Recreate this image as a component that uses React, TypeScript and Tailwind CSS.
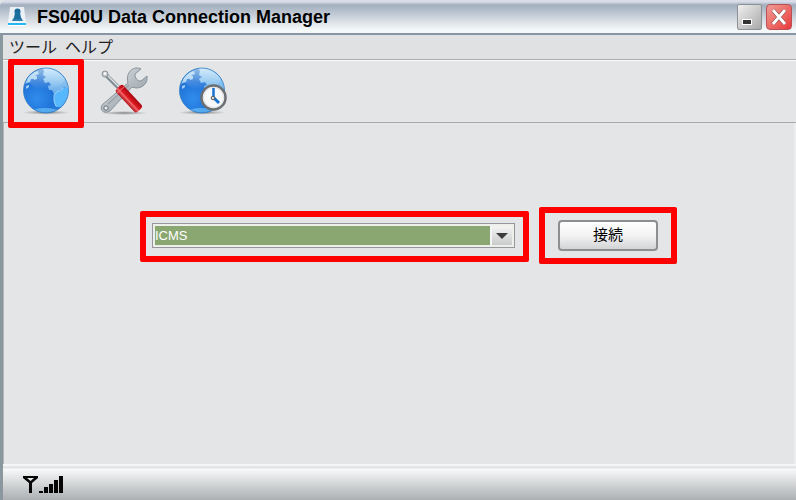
import type { ReactNode } from "react";

const uiFont = "font-['Noto_Sans','Noto_Sans_CJK_JP',sans-serif]";

function AppIcon() {
  return (
    <svg viewBox="0 0 20 20" className="h-5 w-5" aria-hidden="true">
      <path d="M3 0h14l2 16H1z" fill="#f4f8fc" opacity="0.85" />
      <path d="M5 14c1-3 3-4 3-6h5c0 2 2 3 3 6z" fill="#2f7fae" />
      <circle cx="10.500" cy="4.500" r="3" fill="#17699b" />
      <path d="M8 5h5l1 7H7z" fill="#1b6f9f" />
      <rect x="1" y="16" width="18" height="2" fill="#27b7f0" />
      <rect x="1" y="18" width="18" height="1" fill="#ffffff" />
    </svg>
  );
}

function GlobeShape({ id }: { id: string }) {
  return (
    <>
      <defs>
        <radialGradient id={`${id}-sea`} cx="0.3" cy="0.68" r="0.85">
          <stop offset="0" stopColor="#2f8cec" />
          <stop offset="0.45" stopColor="#2173d8" />
          <stop offset="0.75" stopColor="#3583d2" />
          <stop offset="1" stopColor="#7dbdea" />
        </radialGradient>
        <linearGradient id={`${id}-land`} x1="0" y1="0" x2="0" y2="1">
          <stop offset="0" stopColor="#a9d9f7" />
          <stop offset="1" stopColor="#66aae8" />
        </linearGradient>
        <linearGradient id={`${id}-shine`} x1="0" y1="0" x2="0" y2="1">
          <stop offset="0" stopColor="#ffffff" stopOpacity="0.5" />
          <stop offset="1" stopColor="#ffffff" stopOpacity="0" />
        </linearGradient>
        <radialGradient id={`${id}-shadow`}>
          <stop offset="0" stopColor="#555" stopOpacity="0.75" />
          <stop offset="1" stopColor="#777" stopOpacity="0" />
        </radialGradient>
        <clipPath id={`${id}-clip`}>
          <circle cx="26" cy="24.500" r="22" />
        </clipPath>
      </defs>
      <ellipse cx="26" cy="46.500" rx="24" ry="2.200" fill={`url(#${id}-shadow)`} />
      <circle cx="26" cy="24.500" r="22.500" fill={`url(#${id}-sea)`} stroke="#2f7cc4" strokeWidth="0.800" />
      <g clipPath={`url(#${id}-clip)`}>
        <path
          d="M22 1h13l10 8 5 13-3 1-3-2-2 3-2 0-1 4-2-2 0 4-3-2-2-4-3 0-1-4 3-1-2-3-4 1-2-4 3-2-3-2 1-4z"
          fill={`url(#${id}-land)`}
        />
        <path d="M5 18l3-7 6-5 4-1 1 3-3 1-2 4-3 0-1 3-3 1zM14 10l3 0 0 3-3 1zM6 20l3-1 0 2-3 2z" fill="#b9dff7" opacity="0.850" />
        <path d="M34 29l4-4 3 0 2-3 6 0-1 11-7 8-5 0-2-5z" fill="#57b7fc" />
        <path d="M36 40l-2-5 0-6 4-4 3 0 2-3" fill="none" stroke="#a4d8fb" strokeWidth="0.800" />
        <ellipse cx="26" cy="12" rx="19" ry="11" fill={`url(#${id}-shine)`} />
        <ellipse cx="25" cy="46" rx="14" ry="4" fill="#77cdfb" opacity="0.600" />
      </g>
    </>
  );
}

function GlobeIcon() {
  return (
    <svg viewBox="0 0 52 52" className="h-13 w-13" aria-hidden="true">
      <GlobeShape id="globe" />
    </svg>
  );
}

function ToolsIcon() {
  return (
    <svg viewBox="0 0 52 52" className="h-13 w-13" aria-hidden="true">
      <defs>
        <linearGradient id="steel" x1="0" y1="0" x2="1" y2="1">
          <stop offset="0" stopColor="#eef1f2" />
          <stop offset="0.5" stopColor="#b4bcc2" />
          <stop offset="1" stopColor="#8b959c" />
        </linearGradient>
        <linearGradient id="grip" x1="0" y1="0" x2="1" y2="0">
          <stop offset="0" stopColor="#b00d15" />
          <stop offset="0.35" stopColor="#f2686b" />
          <stop offset="0.5" stopColor="#e01821" />
          <stop offset="1" stopColor="#a70911" />
        </linearGradient>
        <radialGradient id="tool-shadow">
          <stop offset="0" stopColor="#555" stopOpacity="0.7" />
          <stop offset="1" stopColor="#777" stopOpacity="0" />
        </radialGradient>
      </defs>
      <ellipse cx="26" cy="47" rx="24" ry="2" fill="url(#tool-shadow)" />
      <path
        d="M5 38L30 17c-2-7 1-14 8-15 2 0 4 0 5 1l-6 5c0 4 2 7 6 7l6-5c1 7-4 12-11 12l-4-1L12 45c-6 4-12-2-7-7z"
        fill="url(#steel)"
        stroke="#89939a"
        strokeWidth="1"
      />
      <path d="M10 38L31 19" stroke="#9aa3a9" strokeWidth="1.500" fill="none" />
      <circle cx="8" cy="42" r="2.200" fill="#e8ecef" stroke="#626c73" />
      <path d="M7 8L24 25" stroke="#808a91" strokeWidth="4" />
      <path d="M7 7L24 24" stroke="#dfe4e7" strokeWidth="1.500" />
      <circle cx="7" cy="8" r="3" fill="#c5cbd0" stroke="#8a949b" />
      <circle cx="7" cy="7.500" r="1.200" fill="#fff" />
      <rect x="-5" y="-1" width="10" height="31" rx="2.500" transform="translate(21 22) rotate(-43)" fill="url(#grip)" />
      <path d="M19 27l8-7" stroke="#f47b7e" strokeWidth="1" />
    </svg>
  );
}

function HistoryIcon() {
  return (
    <svg viewBox="0 0 52 52" className="h-13 w-13" aria-hidden="true">
      <GlobeShape id="history" />
      <circle cx="37.500" cy="31.500" r="12" fill="#f7f8f9" stroke="#6b6f72" strokeWidth="2.500" />
      <circle cx="37.500" cy="31.500" r="10" fill="none" stroke="#dcdfe1" strokeWidth="1" />
      <path d="M37.500 22v10" stroke="#1673d4" strokeWidth="2.500" />
      <path d="M38 32l5 5" stroke="#1673d4" strokeWidth="3" />
      <circle cx="37" cy="32" r="1.800" fill="#ddd" stroke="#555" />
    </svg>
  );
}

function SignalIcon() {
  return (
    <svg viewBox="0 0 42 20" className="h-5 w-[42px]" role="img" aria-label="電波強度">
      <path d="M1 1h15v2l-6 5v10H7V8L1 3z" fill="#050505" />
      <path d="M5 3h7L8.500 6z" fill="#e8eaec" />
      <path d="M17 16h4v2h-4zM22 12h4v6h-4zM27 9h4v9h-4zM32 5h4v13h-4zM37 1h4v17h-4z" fill="#050505" />
    </svg>
  );
}

function ToolButton({ label, highlighted = false, children }: { label: string; highlighted?: boolean; children: ReactNode }) {
  return (
    <button type="button" aria-label={label} className="relative block">
      {children}
      {highlighted && <span className="pointer-events-none absolute -inset-x-3 -top-[7px] -bottom-[10px] rounded-xs border-6 border-[#fe0000]" />}
    </button>
  );
}

export default function App() {
  return (
    <div className={`flex min-h-screen flex-col bg-[#e4e5e7] text-black ${uiFont}`}>
      <header className="flex h-[35px] items-center rounded-tl-md border-b-2 border-b-[#8795a5] bg-linear-to-b from-[#d9dde8] from-5% via-[#a3afbf] via-15% to-[#f5f8f8] to-90% pr-1 pl-[7px]">
        <AppIcon />
        <h1 className="ml-2.5 flex-1 font-['Liberation_Sans',sans-serif] text-[18px] leading-5 font-bold">
          FS040U Data Connection Manager
        </h1>
        <div className="flex gap-1">
          <button type="button" aria-label="最小化" className="flex h-[26px] w-[25px] items-end rounded-xs border border-[#8d9094] bg-linear-to-br from-[#f0f0f0] to-[#a9a9a9] pb-1 pl-1">
            <span className="h-1.5 w-2.5 border border-white bg-[#333]" />
          </button>
          <button type="button" aria-label="閉じる" className="flex h-[26px] w-[26px] items-center justify-center rounded-sm border border-[#b75157] bg-linear-to-br from-[#ee9a94] to-[#e8333a]">
            <svg viewBox="0 0 18 18" className="h-[18px] w-[18px]" aria-hidden="true">
              <path d="M3 2l12 14M15 2L3 16" stroke="#7d4044" strokeWidth="4" />
              <path d="M3 2l12 14M15 2L3 16" stroke="#fff" strokeWidth="3" />
            </svg>
          </button>
        </div>
      </header>

      <div className="flex flex-1 flex-col border-l-3 border-l-[#8b979f]">
        <nav className="flex h-[25px] items-center gap-2 border-b border-[#aaaeb0] bg-[#e0e1e3] pl-1.5 text-[16px] leading-6 text-[#222222]">
          <button type="button">ツール</button>
          <button type="button">ヘルプ</button>
        </nav>

        <div className="flex h-[63px] items-start gap-[26px] border-t border-b border-t-[#fafbfb] border-b-[#a7a9ab] pt-[5px] pl-[17px]">
          <ToolButton label="接続" highlighted>
            <GlobeIcon />
          </ToolButton>
          <ToolButton label="設定">
            <ToolsIcon />
          </ToolButton>
          <ToolButton label="履歴">
            <HistoryIcon />
          </ToolButton>
        </div>

        <main className="flex flex-1 items-start gap-2.5 border-r-2 border-l border-r-[#eceeef] border-l-[#b4b8bb] pt-[84px] pr-[117px] pl-[136px]">
          <div className="mt-1 flex-1 rounded-xs border-6 border-[#fe0000] pt-1.5 pr-2 pb-2 pl-1.5">
            <div className="flex h-[25px] border border-[#97979b] bg-[#edf0ea] p-0.5">
              <div className="relative flex-1">
                <select
                  aria-label="接続先"
                  defaultValue="ICMS"
                  className="block h-full w-full appearance-none border-r-[22px] border-[#f3f4f4] bg-[#8aa671] font-['Liberation_Sans',sans-serif] text-[13px] leading-4 text-white"
                >
                  <option>ICMS</option>
                </select>
                <span className="pointer-events-none absolute inset-y-0 right-0 flex w-5 items-center justify-center bg-linear-to-b from-[#f5f5f5] to-[#c9caca]">
                  <svg viewBox="0 0 12 6" className="h-1.5 w-3" aria-hidden="true">
                    <path d="M0 0h12L6 6z" fill="#3b3b3d" />
                  </svg>
                </span>
              </div>
            </div>
          </div>
          <div className="rounded-xs border-6 border-[#fe0000] px-[13px] py-[7px]">
            <button
              type="button"
              className="block h-[31px] w-[100px] rounded-sm border-2 border-[#8c8f92] bg-linear-to-b from-white via-[#f3f3f4] to-[#d3d4d5] pb-1 text-[15px] leading-6"
            >
              接続
            </button>
          </div>
        </main>

        <footer className="flex h-9 items-center border-t-2 border-[#f5f6f7] bg-linear-to-b from-[#e3e4e6] from-5% via-[#f7f8f8] via-10% to-[#acb0b3] pt-1 pl-[19px]">
          <SignalIcon />
        </footer>
      </div>
    </div>
  );
}
